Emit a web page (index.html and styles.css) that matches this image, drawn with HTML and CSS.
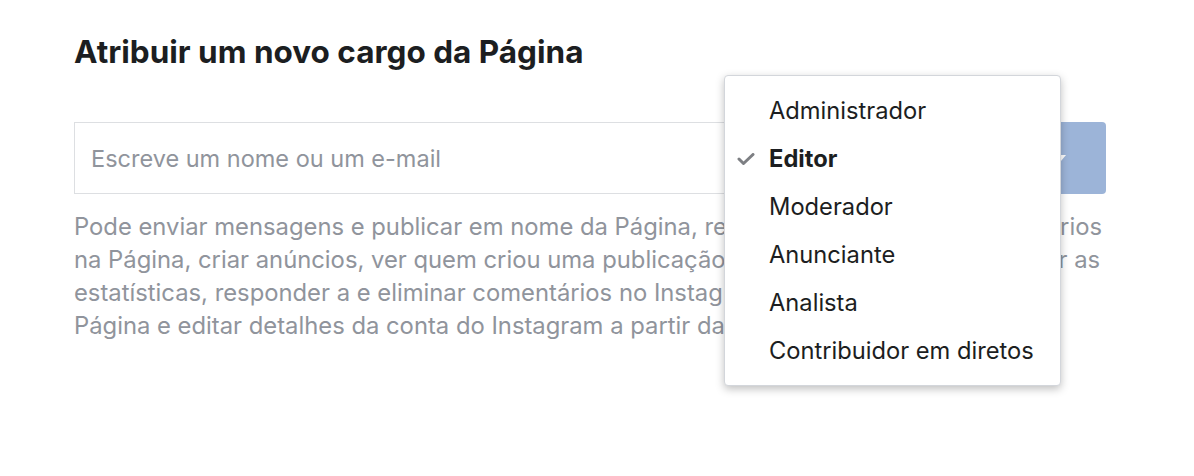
FILE: index.html
```html
<!DOCTYPE html>
<html lang="pt">
  <head>
    <meta charset="UTF-8" />
    <meta name="viewport" content="width=device-width, initial-scale=1.0" />
    <title>Atribuir cargo</title>
    <link rel="stylesheet" href="styles.css">
  </head>
  <body>
    <div class="page">
      <h1>Atribuir um novo cargo da Página</h1>

      <div class="assign-row">
        <input type="text" class="name-input" placeholder="Escreve um nome ou um e-mail" />
        <button type="button" class="role-btn" disabled>
          <span>Editor</span>
          <span class="caret"></span>
        </button>

        <ul class="role-menu">
          <li>Administrador</li>
          <li class="selected">
            <svg class="check" viewBox="0 0 18 12" width="18" height="12">
              <path d="M2 6 L6.5 10.5 L16 1.5" fill="none" stroke="#7d7f83" stroke-width="3" stroke-linecap="round" stroke-linejoin="round" />
            </svg>
            Editor
          </li>
          <li>Moderador</li>
          <li>Anunciante</li>
          <li>Analista</li>
          <li>Contribuidor em diretos</li>
        </ul>
      </div>

      <p class="role-desc">
        Pode enviar mensagens e publicar em nome da Página, responder a e eliminar comentários
        na Página, criar anúncios, ver quem criou uma publicação ou um comentário já feito, ver as<br>
        estatísticas, responder a e eliminar comentários no Instagram a partir da<br>
        Página e editar detalhes da conta do Instagram a partir da Página.
      </p>
    </div>
  </body>
</html>
```

FILE: styles.css
```css
* {
  margin: 0;
  padding: 0;
  box-sizing: border-box;
  font-family: Inter, "Noto Sans", sans-serif;
}

body {
  background-color: white;
  min-height: 100vh;
}

.page {
  width: 1106px;
  padding: 34px 0 0 74px;
}

h1 {
  color: #1c1e21;
  font-size: 31.5px;
  line-height: 36px;
  font-weight: 700;
  margin-bottom: 52px;
}

.assign-row {
  position: relative;
  display: flex;
  gap: 12px;
  height: 72px;
}

.name-input {
  flex: 1;
  border: 1px solid #dddfe2;
  padding: 0 16px;
  font-size: 23.5px;
  color: #1c1e21;
}

.name-input::placeholder {
  color: #90949c;
}

.role-btn {
  display: flex;
  align-items: center;
  justify-content: space-between;
  width: 150px;
  padding: 0 40px 0 24px;
  background-color: #9cb4d8;
  border: none;
  border-radius: 4px;
  color: white;
  font-size: 23.5px;
  font-weight: 600;
}

.caret {
  width: 0;
  height: 0;
  border-left: 5px solid transparent;
  border-right: 5px solid transparent;
  border-top: 6px solid white;
}

.role-menu {
  position: absolute;
  top: -47px;
  left: 650px;
  width: 337px;
  padding: 10px 0 11px;
  list-style: none;
  background-color: white;
  border: 1px solid #d3d6db;
  border-radius: 4px;
  box-shadow: 0 3px 9px rgba(0, 0, 0, 0.25);
}

.role-menu li {
  position: relative;
  display: flex;
  align-items: center;
  height: 48px;
  padding-left: 44px;
  color: #1c1e21;
  font-size: 23.7px;
}

.role-menu li.selected {
  font-weight: 700;
}

.check {
  position: absolute;
  left: 12px;
  top: 19px;
}

.role-desc {
  margin-top: 16px;
  color: #90949c;
  font-size: 23.8px;
  line-height: 33px;
}
```
